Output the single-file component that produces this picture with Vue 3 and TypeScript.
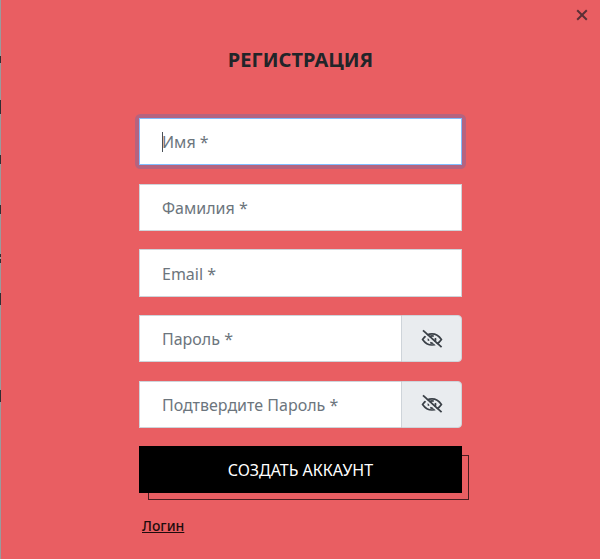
<script setup lang="ts">
interface Field { label: string; toggle: boolean; focused?: boolean }
const fields: Field[] = [
  { label: 'Имя *', toggle: false, focused: true },
  { label: 'Фамилия *', toggle: false },
  { label: 'Email *', toggle: false },
  { label: 'Пароль *', toggle: true },
  { label: 'Подтвердите Пароль *', toggle: true },
]
const marks = [
  [56, 7], [100, 14], [155, 9], [205, 9], [254, 3], [259, 4], [293, 12], [390, 12],
]
</script>

<template>
  <div class="page">
    <div class="strip">
      <i v-for="m in marks" :key="m[0]" class="mark" :style="{ top: m[0] + 'px', height: m[1] + 'px' }"></i>
    </div>
    <main class="modal">
      <button class="close" type="button" aria-label="Закрыть">
        <svg width="12" height="12" viewBox="0 0 12 12"><path d="M1.2 1.2 10.8 10.8M10.8 1.2 1.2 10.8" stroke="#5a2f36" stroke-width="2" fill="none"/></svg>
      </button>
      <h1 class="title">РЕГИСТРАЦИЯ</h1>
      <form class="form" @submit.prevent>
        <div v-for="f in fields" :key="f.label" class="row" :class="{ focused: f.focused }">
          <div class="input">
            <span v-if="f.focused" class="caret"></span>
            <span>{{ f.label }}</span>
          </div>
          <div v-if="f.toggle" class="toggle">
            <svg width="24" height="20" viewBox="0 0 24 20" fill="none" stroke="#3a4047" stroke-width="1.7">
              <path d="M2.6 10.4C5.2 6.6 8.4 4.8 12 4.8s6.8 1.8 9.4 5.6C18.8 14.2 15.6 16 12 16S5.2 14.2 2.6 10.4Z"/>
              <path d="M8.7 11.8A3.7 3.7 0 0 1 13.8 7.2M15.3 9A3.7 3.7 0 0 1 10.2 13.6"/>
              <path d="M2.4 3 20.6 19.4" stroke="#e9ecef" stroke-width="2"/>
              <path d="M3 1.4 21.6 18.2" stroke-width="1.8"/>
            </svg>
          </div>
        </div>
        <div class="submit-wrap">
          <span class="outline"></span>
          <button class="submit" type="submit">СОЗДАТЬ АККАУНТ</button>
        </div>
        <a class="login" href="#">Логин</a>
      </form>
    </main>
  </div>
</template>

<style scoped>
.page {
  width: 600px;
  height: 559px;
  display: flex;
  overflow: hidden;
  font-family: "Noto Sans", "Open Sans", sans-serif;
}
.strip {
  position: relative;
  width: 1px;
  flex: none;
  background: #9a9a9c;
}
.mark {
  position: absolute;
  left: 0;
  width: 1px;
  background: #2f2f33;
}
.modal {
  position: relative;
  flex: 1;
  background: #e95e62;
  display: flex;
  flex-direction: column;
  align-items: center;
}
.close {
  position: absolute;
  top: 9px;
  right: 12px;
  width: 12px;
  height: 12px;
  padding: 0;
  border: 0;
  background: none;
  display: flex;
}
.title {
  margin: 46px 0 0;
  font-size: 20px;
  line-height: 28px;
  font-weight: 700;
  color: #212529;
}
.form {
  width: 323px;
  margin: 44px 0 0;
  display: flex;
  flex-direction: column;
  gap: 18.3px;
}
.row {
  display: flex;
  height: 47.4px;
  border-radius: 2px;
}
.row.focused {
  box-shadow: 0 0 0 4px #b5637f;
}
.input {
  flex: 1;
  display: flex;
  align-items: center;
  padding: 1px 0 0 22px;
  background: #fff;
  border: 1px solid #ced4da;
  border-right: 0;
  font-size: 16px;
  color: #6c757d;
}
.row:not(:has(.toggle)) .input {
  border-right: 1px solid #ced4da;
}
.focused .input {
  border-color: #80bdff !important;
  position: relative;
}
.caret {
  position: absolute;
  left: 22px;
  top: 13px;
  width: 1px;
  height: 20px;
  background: #495057;
}
.toggle {
  box-sizing: border-box;
  width: 61px;
  flex: none;
  display: flex;
  align-items: center;
  justify-content: center;
  background: #e9ecef;
  border: 1px solid #ced4da;
  border-radius: 0 4px 4px 0;
}
.submit-wrap {
  position: relative;
  height: 47px;
}
.outline {
  position: absolute;
  left: 9px;
  top: 9px;
  width: 321px;
  height: 45px;
  box-sizing: border-box;
  border: 1px solid #4a1c20;
}
.submit {
  position: relative;
  display: block;
  width: 100%;
  height: 47px;
  border: 0;
  background: #000;
  color: #fff;
  font: inherit;
  font-size: 16px;
}
.login {
  align-self: flex-start;
  margin: 4px 0 0 3px;
  font-size: 14px;
  font-weight: 500;
  line-height: 20px;
  color: #1d0c0d;
}
</style>
